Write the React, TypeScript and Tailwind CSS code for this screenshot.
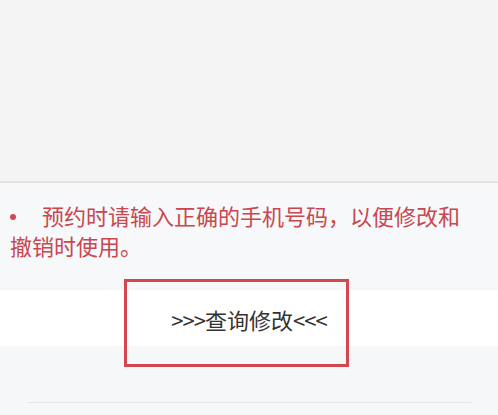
import React from 'react';

const cjk = { fontFamily: '"Noto Sans CJK SC", "Noto Sans", sans-serif' };

export default function App() {
    return (
        <div className="w-[498px] h-[415px] overflow-hidden bg-[#f6f7f9] relative" style={cjk}>
            {/* Top blank area */}
            <div className="h-[183px] bg-[#f4f4f4] border-b-2 border-[#e4e4e4]" />

            {/* Notice */}
            <div className="bg-[#f7f8fa] pl-[10px] pr-[20px] pt-[17px] pb-[30px]">
                <p className="text-[22px] leading-[30px] text-[#c9474e]">
                    <span className="inline-block w-[32px]">
                        <span className="inline-block w-[6px] h-[6px] rounded-full bg-[#cf4a52] align-middle mb-[4px]" />
                    </span>
                    预约时请输入正确的手机号码，以便修改和撤销时使用。
                </p>
            </div>

            {/* Query link */}
            <div className="h-[56px] bg-white flex items-center justify-center">
                <span className="text-[22px] text-[#333333] pt-[2px]">
                    <span className="tracking-[-1px]">&gt;&gt;&gt;</span>查询修改<span className="tracking-[-1px]">&lt;&lt;&lt;</span>
                </span>
            </div>

            <div className="mt-[56px] mx-[27px] h-px bg-[#e6e6e8]" />

            {/* Red highlight annotation */}
            <div className="absolute left-[124px] top-[279px] w-[225px] h-[88px] border-[3px] border-[#d5474f]" />
        </div>
    );
}
